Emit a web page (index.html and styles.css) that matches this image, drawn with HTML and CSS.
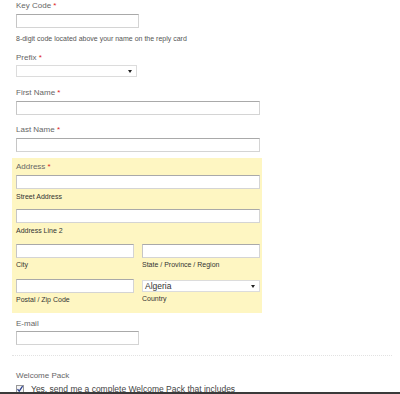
FILE: index.html
```html
<!DOCTYPE html>
<html>
<head>
<meta charset="utf-8">
<link rel="stylesheet" href="styles.css">
</head>
<body>
<form class="form">
  <div class="field">
    <label class="lbl">Key Code <span class="req">*</span></label>
    <input class="inp inp-short" type="text">
    <div class="help">8-digit code located above your name on the reply card</div>
  </div>
  <div class="field f-prefix">
    <label class="lbl">Prefix <span class="req">*</span></label>
    <div class="sel sel-short"><span class="sel-val"></span><span class="arrow"></span></div>
  </div>
  <div class="field f-name">
    <label class="lbl">First Name <span class="req">*</span></label>
    <input class="inp inp-full" type="text">
  </div>
  <div class="field f-name">
    <label class="lbl">Last Name <span class="req">*</span></label>
    <input class="inp inp-full" type="text">
  </div>
  <div class="address">
    <label class="lbl">Address <span class="req">*</span></label>
    <input class="inp inp-full" type="text">
    <div class="sub">Street Address</div>
    <input class="inp inp-full line2" type="text">
    <div class="sub">Address Line 2</div>
    <div class="row row1">
      <div class="col">
        <input class="inp inp-half" type="text">
        <div class="sub">City</div>
      </div>
      <div class="col">
        <input class="inp inp-half" type="text">
        <div class="sub">State / Province / Region</div>
      </div>
    </div>
    <div class="row row2">
      <div class="col">
        <input class="inp inp-half" type="text">
        <div class="sub">Postal / Zip Code</div>
      </div>
      <div class="col">
        <div class="sel sel-half"><span class="sel-val">Algeria</span><span class="arrow"></span></div>
        <div class="sub">Country</div>
      </div>
    </div>
  </div>
  <div class="field f-email">
    <label class="lbl">E-mail</label>
    <input class="inp inp-short" type="text">
  </div>
  <div class="divider"></div>
  <div class="field f-welcome">
    <label class="lbl">Welcome Pack</label>
    <div class="check-row">
      <span class="cbox"><svg width="8" height="8" viewBox="0 0 8 8"><path d="M1.5 4.2 L3.2 6.2 L6.6 1.2" fill="none" stroke="#2a3f8f" stroke-width="1.2"/></svg></span>
      <span class="check-text">Yes, send me a complete Welcome Pack that includes</span>
    </div>
  </div>
</form>
<div class="bottom-bar"></div>
</body>
</html>
```

FILE: styles.css
```css
html, body {
  margin: 0;
  padding: 0;
  background: #fff;
  font-family: "Liberation Sans", Arial, sans-serif;
  overflow: hidden;
}

.form {
  padding: 1px 0 0 16px;
  display: block;
}

.field {
  display: flex;
  flex-direction: column;
  align-items: flex-start;
}

.lbl {
  display: block;
  font-size: 8px;
  line-height: 10px;
  color: #666;
  margin-bottom: 3px;
}

.req {
  color: #d22;
}

.inp {
  display: block;
  box-sizing: border-box;
  height: 14px;
  margin: 0;
  padding: 0 2px;
  background: #fff;
  border: 1px solid #d4d4d4;
  border-top-color: #a9a9a9;
  border-left-color: #c6c6c6;
  outline: none;
}

.inp-short { width: 123px; }
.inp-full { width: 244px; }
.inp-half { width: 118px; }

.help {
  margin-top: 6px;
  font-size: 7px;
  line-height: 9px;
  color: #555;
}

.f-prefix { margin-top: 10px; }
.f-prefix .lbl { margin-bottom: 2px; }

.sel {
  box-sizing: border-box;
  height: 12px;
  background: #fff;
  border: 1px solid #dcdcdc;
  display: flex;
  align-items: center;
  justify-content: space-between;
  padding: 0 4px 0 2px;
}

.sel-short { width: 121px; }
.sel-half { width: 118px; }

.sel-val {
  font-size: 8.5px;
  line-height: 10px;
  color: #333;
}

.arrow {
  width: 0;
  height: 0;
  border-left: 2.5px solid transparent;
  border-right: 2.5px solid transparent;
  border-top: 3px solid #222;
}

.f-name { margin-top: 11px; }

.f-name + .f-name { margin-top: 10px; }

.address {
  margin: 6px 0 0 -4px;
  width: 250px;
  box-sizing: border-box;
  padding: 4px 4px 8px 4px;
  background: #fef6c2;
}

.sub {
  font-size: 7px;
  line-height: 10px;
  color: #333;
  margin-top: 3px;
}

.line2 { margin-top: 7px; }

.row {
  display: flex;
  gap: 8px;
}

.row1 { margin-top: 8px; }
.row2 { margin-top: 9px; }

.row .sub { margin-top: 2px; }

.row2 .col:last-child .sub { margin-top: 2px; }
.row2 .col:last-child .sel { margin-top: 1px; }

.f-email { margin-top: 6px; }
.f-email .lbl { margin-bottom: 2px; }

.divider {
  margin: 10px 8px 0 -4px;
  border-top: 1px dotted #e2e2e2;
}

.f-welcome { margin-top: 15px; }

.f-welcome .lbl { margin-bottom: 3px; }

.check-row {
  display: flex;
  align-items: center;
  gap: 7px;
}

.cbox {
  display: flex;
  width: 8px;
  height: 8px;
  box-sizing: border-box;
  border: 1px solid #999;
  background: #f4f4f4;
}

.cbox svg {
  margin: -1px;
}

.check-text {
  font-size: 8.5px;
  line-height: 10px;
  color: #444;
}

.bottom-bar {
  position: fixed;
  left: 0;
  right: 0;
  bottom: 0;
  height: 2px;
  background: #3a3a3a;
}
```
